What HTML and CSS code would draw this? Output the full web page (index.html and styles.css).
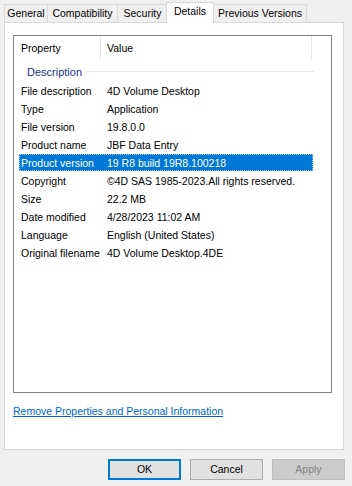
FILE: index.html
```html
<!DOCTYPE html>
<html>
<head>
<link rel="stylesheet" href="styles.css">
</head>
<body>

<div class="dialog">
  <div class="tabs">
    <div class="tab tab-general">General</div>
    <div class="tab tab-compat">Compatibility</div>
    <div class="tab tab-security">Security</div>
    <div class="tab tab-details selected">Details</div>
    <div class="tab tab-prev">Previous Versions</div>
  </div>

  <div class="panel">
    <div class="listbox">
      <div class="list-head">
        <div class="head-cell head-prop">Property</div>
        <div class="head-cell head-value">Value</div>
        <div class="head-cell head-rest"></div>
      </div>

      <div class="group">
        <span class="group-title">Description</span>
        <span class="group-line"></span>
      </div>

      <div class="row"><span class="key">File description</span><span class="val">4D Volume Desktop</span></div>
      <div class="row"><span class="key">Type</span><span class="val">Application</span></div>
      <div class="row"><span class="key">File version</span><span class="val">19.8.0.0</span></div>
      <div class="row"><span class="key">Product name</span><span class="val">JBF Data Entry</span></div>
      <div class="row active"><span class="key">Product version</span><span class="val">19 R8 build 19R8.100218</span></div>
      <div class="row"><span class="key">Copyright</span><span class="val">&copy;4D SAS 1985-2023.All rights reserved.</span></div>
      <div class="row"><span class="key">Size</span><span class="val">22.2 MB</span></div>
      <div class="row"><span class="key">Date modified</span><span class="val">4/28/2023 11:02 AM</span></div>
      <div class="row"><span class="key">Language</span><span class="val">English (United States)</span></div>
      <div class="row"><span class="key">Original filename</span><span class="val">4D Volume Desktop.4DE</span></div>
    </div>

    <a class="remove-link" href="#">Remove Properties and Personal Information</a>
  </div>

  <div class="buttons">
    <div class="btn btn-default">OK</div>
    <div class="btn">Cancel</div>
    <div class="btn btn-disabled">Apply</div>
  </div>
</div>

</body>
</html>
```

FILE: styles.css
```css
html, body {
    margin: 0;
    padding: 0;
}

body {
    background: #f0f0f0;
    font-family: "Liberation Sans", Arial, sans-serif;
    font-size: 10.5px;
    color: #000;
    width: 352px;
    height: 486px;
    overflow: hidden;
}

.dialog {
    display: flex;
    flex-direction: column;
}

/* tab strip */
.tabs {
    display: flex;
    align-items: flex-end;
    padding: 2px 0 0 4px;
    height: 20px;
}

.tab {
    box-sizing: border-box;
    height: 18px;
    border: 1px solid #d9d9d9;
    border-bottom: none;
    border-left: none;
    background: #f0f0f0;
    text-align: center;
    line-height: 17px;
}
.tab-general {width: 44px; border-left: 1px solid #d9d9d9;}
.tab-compat {width: 70px;}
.tab-security {width: 50px;}
.tab-prev {width: 93px;}

.tab.selected {
    position: relative;
    z-index: 1;
    width: 48px;
    height: 21px;
    margin-left: -2px;
    margin-bottom: -1px;
    background: #fff;
    border-left: 1px solid #d9d9d9;
    line-height: 17px;
}
.tab-details + .tab {border-left: none;}

/* page */
.panel {
    box-sizing: border-box;
    margin: 0 8px 0 4px;
    height: 428px;
    background: #fff;
    border: 1px solid #d9d9d9;
    padding: 12px 0 0 8px;
}

.listbox {
    box-sizing: border-box;
    width: 319px;
    height: 358px;
    border: 1px solid #828282;
    background: #fff;
}

.list-head {
    display: flex;
    height: 25px;
}
.head-cell {
    box-sizing: border-box;
    height: 24px;
    line-height: 24px;
    border-right: 1px solid #e5e5e5;
}
.head-prop {width: 87px; padding-left: 7px;}
.head-value {width: 211px; padding-left: 6px;}
.head-rest {border-right: none;}

.group {
    display: flex;
    align-items: center;
    height: 21px;
    padding-left: 13px;
}
.group-title {
    color: #1e3287;
    font-size: 11px;
    padding-right: 4px;
}
.group-line {
    width: 228px;
    border-top: 1px solid #e2e6ee;
    margin-top: -1px;
}

.row {
    box-sizing: border-box;
    display: flex;
    align-items: center;
    width: 294px;
    height: 18px;
    margin-left: 5px;
    padding-left: 2px;
    white-space: nowrap;
}
.row .key {width: 86px;}
.row.active {
    background: #0078d7;
    color: #fff;
    outline: 1px dotted #9cc7ec;
    outline-offset: -1px;
    height: 17px;
    margin-bottom: 1px;
}

.remove-link {
    display: inline-block;
    margin: 12px 0 0 0;
    color: #0066cc;
    text-decoration: underline;
}

/* buttons */
.buttons {
    display: flex;
    justify-content: flex-end;
    gap: 9px;
    padding: 9px 7px 0 0;
}

.btn {
    box-sizing: border-box;
    width: 73px;
    height: 21px;
    line-height: 19px;
    text-align: center;
    background: #e1e1e1;
    border: 1px solid #adadad;
}
.btn-default {
    border: 2px solid #0078d7;
    line-height: 17px;
}
.btn-disabled {
    background: #cccccc;
    border-color: #bfbfbf;
    color: #838383;
}
```
